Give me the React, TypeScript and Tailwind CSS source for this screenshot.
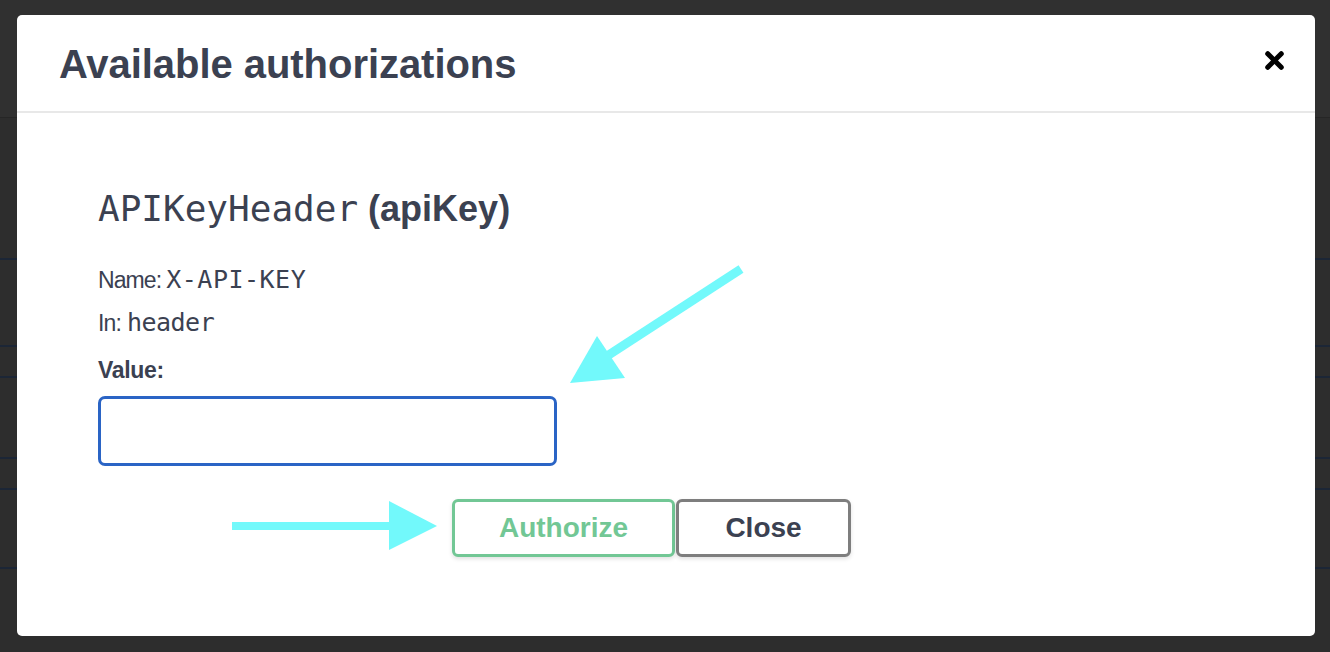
import { X } from "lucide-react";

// Swagger "Available authorizations" dialog over the dimmed page
const sans = "font-['Liberation_Sans',Arial,sans-serif]";
const mono = "font-['DejaVu_Sans_Mono','Liberation_Mono',monospace]";

function PageBehind() {
    return (
        <div className="flex flex-col h-[652px] bg-[#2d2d2d]">
            <div className="h-[118px] shrink-0 border-b border-[#262626] bg-[#303030]" />
            <div className="h-[142px] shrink-0 border-b-2 border-[#1c2636]" />
            <div className="h-[87px] shrink-0 border-b-2 border-[#1c2636]" />
            <div className="h-[31px] shrink-0 border-b-2 border-[#1c2636]" />
            <div className="h-[81px] shrink-0 border-b-2 border-[#1c2636]" />
            <div className="h-[31px] shrink-0 border-b-2 border-[#1c2636]" />
            <div className="h-[79px] shrink-0 border-b-2 border-[#1c2636]" />
            <div className="flex-1" />
        </div>
    );
}

function Arrows() {
    return (
        <svg className="absolute inset-0 pointer-events-none" width="1330" height="652" viewBox="0 0 1330 652">
            {/* diagonal arrow to the input */}
            <line x1="741" y1="269" x2="604" y2="358" stroke="#72f9fb" strokeWidth="9" />
            <polygon points="570,383 597,336 625,378" fill="#72f9fb" />
            {/* horizontal arrow to Authorize */}
            <rect x="232" y="522" width="160" height="8" fill="#72f9fb" />
            <polygon points="389,501 437,526 389,550" fill="#72f9fb" />
        </svg>
    );
}

export default function App() {
    return (
        <div className={`relative w-[1330px] h-[652px] overflow-hidden ${sans}`}>
            <PageBehind />

            {/* Modal */}
            <div className="absolute left-[17px] top-[15px] w-[1298px] h-[621px] bg-white rounded-[5px] flex flex-col">
                <div className="h-[98px] shrink-0 flex items-center justify-between pl-[42px] pr-[27px] border-b-2 border-[#e8e8e8]">
                    <h3 className="text-[40px] font-bold text-[#3b4151] tracking-[-0.05px] pt-[2px]">
                        Available authorizations
                    </h3>
                    <X className="w-[27px] h-[27px] text-black mb-[6px]" strokeWidth={4.5} />
                </div>

                <div className="pl-[81px] pt-[78px] flex flex-col text-[#3b4151]">
                    <h4 className="flex items-baseline leading-none h-[44px]">
                        <span className={`${mono} text-[36px]`}>APIKeyHeader</span>
                        <span className="text-[36px] font-bold ml-[10px]">(apiKey)</span>
                    </h4>
                    <div className="mt-[26px] h-[43px] flex items-baseline text-[23px] tracking-[-0.9px]">
                        <span>Name:</span>
                        <span className={`${mono} text-[25px] ml-[5px] tracking-[0.5px]`}>X-API-KEY</span>
                    </div>
                    <div className="h-[43px] flex items-baseline text-[23px] tracking-[-0.9px]">
                        <span>In:</span>
                        <span className={`${mono} text-[25px] ml-[6px] tracking-[-0.5px]`}>header</span>
                    </div>
                    <label className="mt-[5px] text-[23px] font-bold h-[36px] leading-[36px] tracking-[-0.3px]">Value:</label>
                    <input
                        type="text"
                        className="mt-[8px] w-[459px] h-[70px] border-[3px] border-[#2a64c5] rounded-[7px] outline-none bg-white"
                    />

                    <div className="mt-[33px] ml-[354px] flex">
                        <button className="w-[223px] h-[58px] border-[3px] border-[#72c795] rounded-[6px] text-[#72c795] text-[28px] font-bold shadow-[0_2px_4px_rgba(0,0,0,0.12)] bg-white">
                            Authorize
                        </button>
                        <button className="ml-[1px] w-[175px] h-[58px] border-[3px] border-[#7e7e7e] rounded-[6px] text-[#3b4151] text-[28px] font-bold shadow-[0_2px_4px_rgba(0,0,0,0.12)] bg-white">
                            Close
                        </button>
                    </div>
                </div>
            </div>

            <Arrows />
        </div>
    );
}
